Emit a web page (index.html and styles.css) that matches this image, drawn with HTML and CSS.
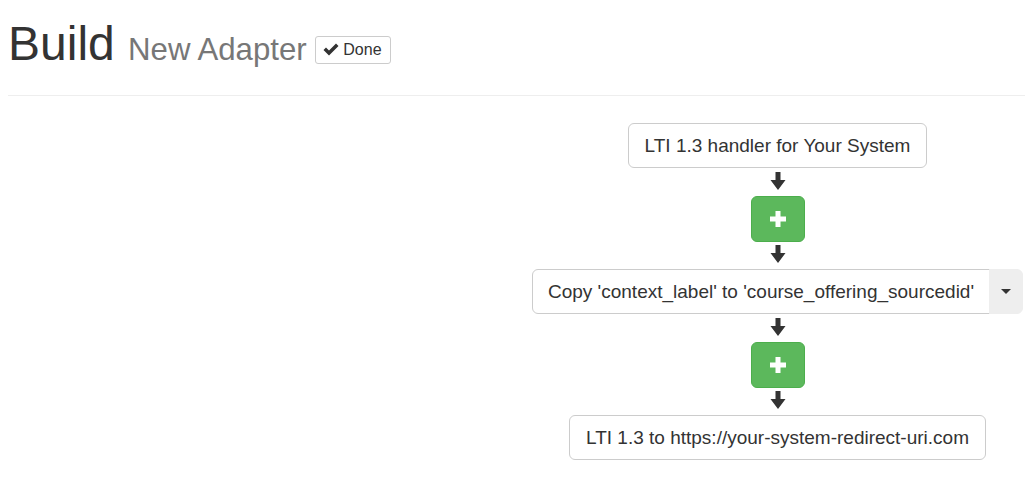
FILE: index.html
```html
<!DOCTYPE html>
<html lang="en">
<head>
<meta charset="utf-8">
<title>Build New Adapter</title>
<link rel="stylesheet" href="styles.css">
</head>
<body>
  <header class="page-header">
    <h1 class="title">Build <small class="subtitle">New Adapter <button class="btn-done" type="button"><svg class="icon-ok" viewBox="0 0 16 13" aria-hidden="true"><path d="M0.5 7 L3 4.5 L6 7.5 L13 0.5 L15.5 3 L6 12.5 Z"/></svg>Done</button></small></h1>
  </header>

  <main class="workspace">
    <div class="col"></div>
    <div class="col flow">
      <button class="step" type="button">LTI 1.3 handler for Your System</button>
      <div class="arrow"><svg viewBox="0 0 16 18" aria-hidden="true"><polygon points="5.5,0 10.5,0 10.5,8 15.5,8 8,18 0.5,8 5.5,8"/></svg></div>
      <button class="add" type="button"><svg viewBox="0 0 16 16" aria-hidden="true"><path d="M5.5 0 H10.5 V5.5 H16 V10.5 H10.5 V16 H5.5 V10.5 H0 V5.5 H5.5 Z"/></svg></button>
      <div class="arrow"><svg viewBox="0 0 16 18" aria-hidden="true"><polygon points="5.5,0 10.5,0 10.5,8 15.5,8 8,18 0.5,8 5.5,8"/></svg></div>
      <div class="step-group">
        <button class="step step-main" type="button">Copy 'context_label' to 'course_offering_sourcedid'</button>
        <button class="step-toggle" type="button"><span class="caret"></span></button>
      </div>
      <div class="arrow"><svg viewBox="0 0 16 18" aria-hidden="true"><polygon points="5.5,0 10.5,0 10.5,8 15.5,8 8,18 0.5,8 5.5,8"/></svg></div>
      <button class="add" type="button"><svg viewBox="0 0 16 16" aria-hidden="true"><path d="M5.5 0 H10.5 V5.5 H16 V10.5 H10.5 V16 H5.5 V10.5 H0 V5.5 H5.5 Z"/></svg></button>
      <div class="arrow"><svg viewBox="0 0 16 18" aria-hidden="true"><polygon points="5.5,0 10.5,0 10.5,8 15.5,8 8,18 0.5,8 5.5,8"/></svg></div>
      <button class="step" type="button">LTI 1.3 to https://your-system-redirect-uri.com</button>
    </div>
  </main>
</body>
</html>
```

FILE: styles.css
```css
html, body {
  margin: 0;
  padding: 0;
  background: #fff;
}

body {
  font-family: "Liberation Sans", Arial, sans-serif;
  color: #333;
}

button {
  font-family: inherit;
  cursor: pointer;
}

/* ---- page header ---- */
.page-header {
  margin: 0 8px;
  padding: 17px 0 19px;
  border-bottom: 1px solid #eee;
}

.title {
  margin: 0;
  font-size: 48px;
  font-weight: 400;
  line-height: 53px;
  color: #333;
}

.subtitle {
  font-size: 65%;
  color: #777;
}

.btn-done {
  display: inline-flex;
  align-items: center;
  gap: 4px;
  margin-left: 0;
  padding: 4px 8px 4px 7px;
  font-size: 16px;
  line-height: 18px;
  color: #333;
  background: #fff;
  border: 1px solid #ccc;
  border-radius: 3px;
  vertical-align: 4px;
}

.icon-ok {
  width: 16px;
  height: 13px;
  fill: #333;
}

/* ---- adapter flow ---- */
.workspace {
  display: grid;
  grid-template-columns: 1fr 1fr;
  padding-left: 11px;
  padding-top: 27px;
}

.flow {
  display: flex;
  flex-direction: column;
  align-items: center;
}

.step {
  padding: 10px 16px;
  font-size: 19px;
  line-height: 23px;
  color: #333;
  background: #fff;
  border: 1px solid #ccc;
  border-radius: 6px;
  white-space: nowrap;
}

.step-group {
  display: flex;
}

.step-main {
  padding-left: 15px;
  padding-right: 15px;
  border-top-right-radius: 0;
  border-bottom-right-radius: 0;
}

.step-toggle {
  display: flex;
  align-items: center;
  justify-content: center;
  margin-left: -1px;
  padding: 10px 11px;
  background: #eee;
  border: 1px solid #eee;
  border-radius: 0 6px 6px 0;
}

.caret {
  display: block;
  width: 0;
  height: 0;
  border-top: 5px solid #333;
  border-left: 5px solid transparent;
  border-right: 5px solid transparent;
}

.arrow {
  height: 27.5px;
  box-sizing: border-box;
  padding-top: 3.5px;
}

.arrow svg {
  display: block;
  width: 16px;
  height: 18px;
  fill: #333;
}

.add {
  display: flex;
  align-items: center;
  justify-content: center;
  width: 54px;
  height: 46px;
  padding: 0;
  background: #5cb85c;
  border: 1px solid #4cae4c;
  border-radius: 6px;
}

.add svg {
  width: 16px;
  height: 16px;
  fill: #fff;
}
```
